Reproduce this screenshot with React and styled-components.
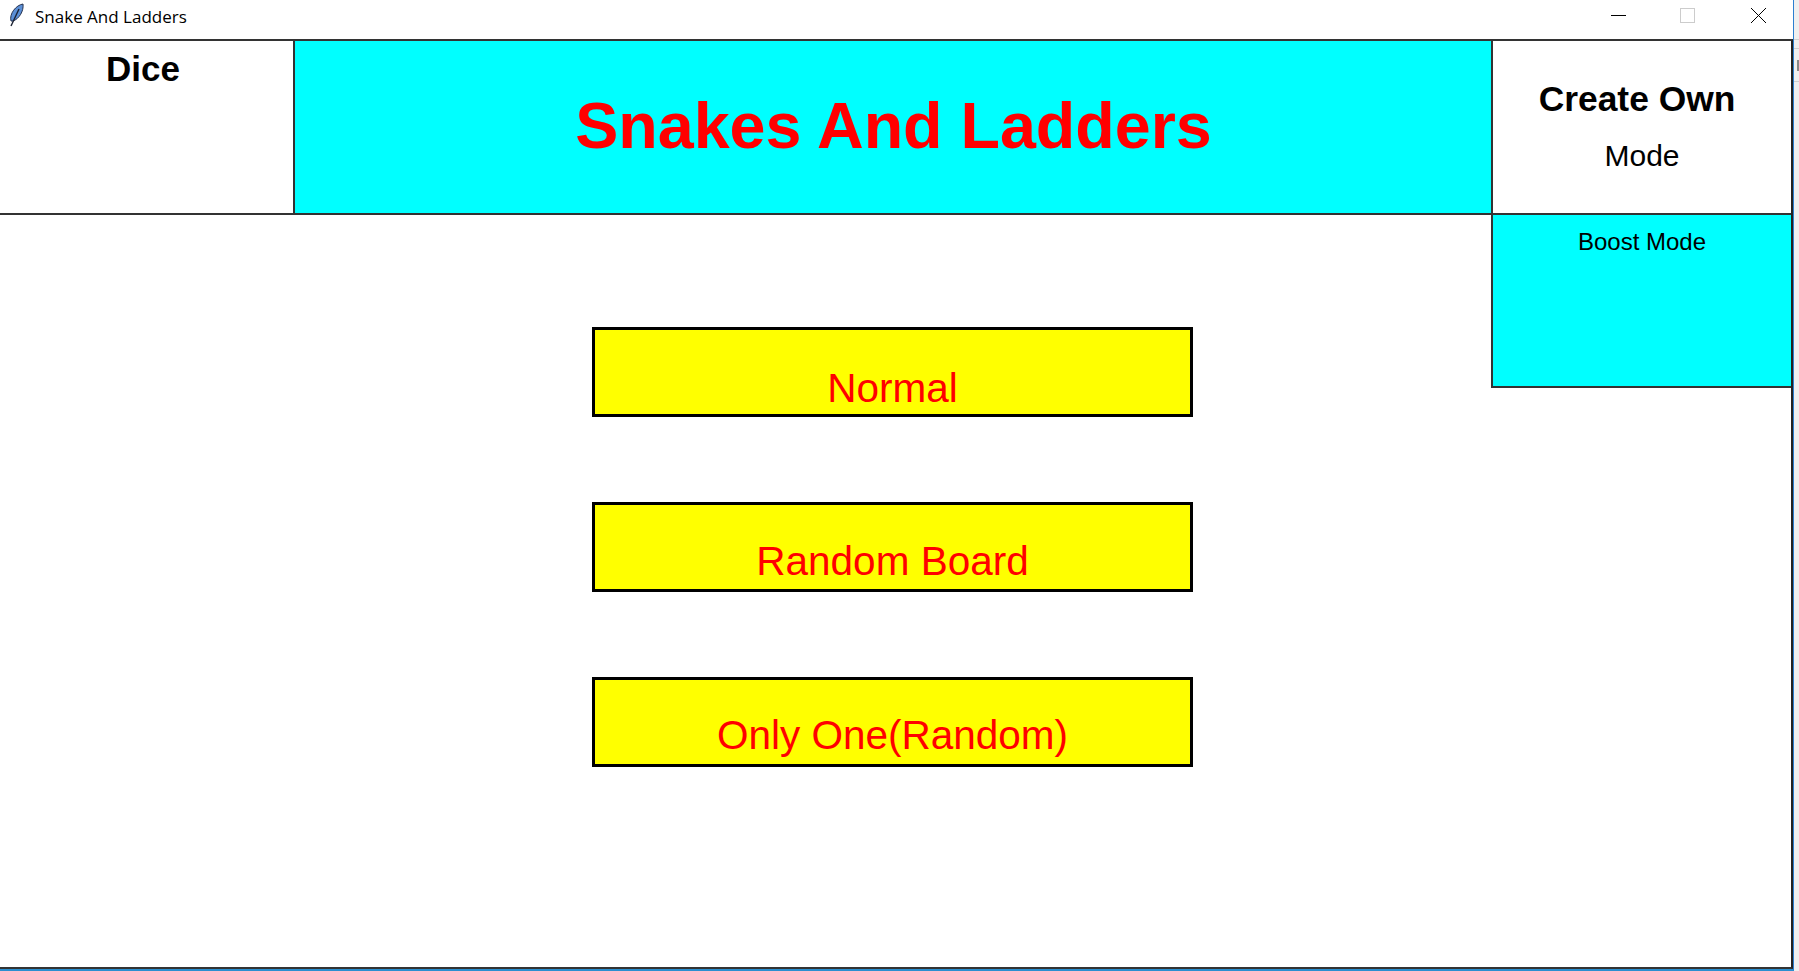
import React from 'react';
import styled, {createGlobalStyle} from "styled-components";

const GlobalStyle = createGlobalStyle`
  html, body {
    margin: 0;
    height: 100%;
    background: #fff;
    overflow: hidden;
  }
`;
const Desktop = styled.div`
  display: flex;
  width: 1799px;
  height: 971px;
  background: #efefef;
`;
const Window = styled.div`
  display: flex;
  flex-direction: column;
  flex: 0 0 1794px;
  height: 971px;
  box-sizing: border-box;
  background: #fff;
  border-right: 1px solid #2b7fd0;
  border-bottom: 2px solid #2b8fd0;
`;
const SideStrip = styled.div`
  flex: 1;
  overflow: hidden;
  padding-top: 39px;
`;
const SideRow = styled.div`
  display: flex;
  align-items: center;
  justify-content: flex-end;
  height: ${props => props.$height}px;
  border-top: 1px solid #cfcfcf;
  box-sizing: border-box;
`;
const SideMark = styled.div`
  width: 2px;
  height: 11px;
  background: #888;
`;
const TitleBar = styled.div`
  display: flex;
  align-items: flex-start;
  flex: 0 0 39px;
  padding: 2px 0 0 8px;
  box-sizing: border-box;
`;
const AppTitle = styled.span`
  margin: 4px auto 0 9px;
  font-family: "Open Sans", sans-serif;
  font-size: 17px;
  line-height: 22px;
  color: #000;
`;
const WinButton = styled.button`
  display: flex;
  align-items: center;
  justify-content: center;
  width: 70px;
  height: 26px;
  padding: 0;
  border: 0;
  background: none;
`;
const Content = styled.div`
  flex: 1;
  display: grid;
  grid-template-columns: 293px 1198px 1fr;
  grid-template-rows: 174px 1fr;
  border-top: 2px solid #333;
  border-bottom: 2px solid #333;
  border-right: 2px solid #222;
  box-sizing: border-box;
  font-family: "Liberation Sans", Arial, sans-serif;
  color: #000;
`;
const DicePanel = styled.div`
  border-bottom: 2px solid #333;
  text-align: center;
  font-size: 35px;
  font-weight: bold;
  line-height: 40px;
  padding: 8px 7px 0 0;
  box-sizing: border-box;
`;
const TitlePanel = styled.div`
  display: flex;
  align-items: center;
  justify-content: center;
  background: #00ffff;
  border-left: 2px solid #333;
  border-bottom: 2px solid #333;
  box-sizing: border-box;
  padding: 0 0 3px 1px;
  color: #ff0000;
  font-size: 64.6px;
  font-weight: bold;
`;
const OwnPanel = styled.div`
  display: flex;
  flex-direction: column;
  align-items: center;
  border-left: 2px solid #333;
  border-bottom: 2px solid #333;
  box-sizing: border-box;
`;
const OwnTitle = styled.div`
  margin-top: 38px;
  margin-left: -10px;
  font-size: 35.4px;
  font-weight: bold;
  line-height: 40px;
`;
const OwnSub = styled.div`
  margin-top: 20px;
  font-size: 30px;
  line-height: 34px;
`;
const MenuPanel = styled.div`
  grid-column: 2;
  display: flex;
  flex-direction: column;
  align-items: center;
  gap: 85px;
  padding: 112px 0 0 1px;
`;
const MenuButton = styled.button`
  display: flex;
  align-items: flex-end;
  justify-content: center;
  width: 601px;
  height: 90px;
  padding: 0 0 ${props => props.$lift}px;
  background: #ffff00;
  border: 3px solid #000;
  box-sizing: border-box;
  color: #ff0000;
  font-family: inherit;
  font-size: 40.5px;
  line-height: 48px;
`;
const BoostPanel = styled.div`
  height: 173px;
  background: #00ffff;
  border-left: 2px solid #333;
  border-bottom: 2px solid #333;
  box-sizing: border-box;
  text-align: center;
  font-size: 24px;
  line-height: 28px;
  padding-top: 13px;
`;

const Feather = () => (
    <svg width="18" height="25" viewBox="0 0 18 25">
        <path d="M3 19 C1 12 8 3 15 2 C16 9 11 17 5 19 Z" fill="#5b8fd6" stroke="#26324f" strokeWidth="1"/>
        <path d="M3 24 L11 7" stroke="#1c2233" strokeWidth="1.4" fill="none"/>
    </svg>
);

const modes = [
    {label: 'Normal', lift: 2},
    {label: 'Random Board', lift: 4},
    {label: 'Only One(Random)', lift: 5},
];

const App = () => {
    return (
        <Desktop>
            <GlobalStyle/>
            <Window>
                <TitleBar>
                    <Feather/>
                    <AppTitle>Snake And Ladders</AppTitle>
                    <WinButton aria-label="minimize">
                        <svg width="16" height="16" viewBox="0 0 16 16">
                            <path d="M1 8.5 H16" stroke="#000" strokeWidth="1"/>
                        </svg>
                    </WinButton>
                    <WinButton aria-label="maximize">
                        <svg width="16" height="16" viewBox="0 0 16 16">
                            <rect x="0.5" y="1.5" width="14" height="14" fill="none" stroke="#ccc"/>
                        </svg>
                    </WinButton>
                    <WinButton aria-label="close">
                        <svg width="16" height="16" viewBox="0 0 16 16">
                            <path d="M1 1 L16 16 M16 1 L1 16" stroke="#000" strokeWidth="1"/>
                        </svg>
                    </WinButton>
                </TitleBar>
                <Content>
                    <DicePanel>Dice</DicePanel>
                    <TitlePanel>Snakes And Ladders</TitlePanel>
                    <OwnPanel>
                        <OwnTitle>Create Own</OwnTitle>
                        <OwnSub>Mode</OwnSub>
                    </OwnPanel>
                    <MenuPanel>
                        {modes.map(mode => <MenuButton key={mode.label} $lift={mode.lift}>{mode.label}</MenuButton>)}
                    </MenuPanel>
                    <BoostPanel>Boost Mode</BoostPanel>
                </Content>
            </Window>
            <SideStrip>
                <SideRow $height={9}/>
                <SideRow $height={33}><SideMark/></SideRow>
                <SideRow $height={9}/>
            </SideStrip>
        </Desktop>
    );
};

export default App;
